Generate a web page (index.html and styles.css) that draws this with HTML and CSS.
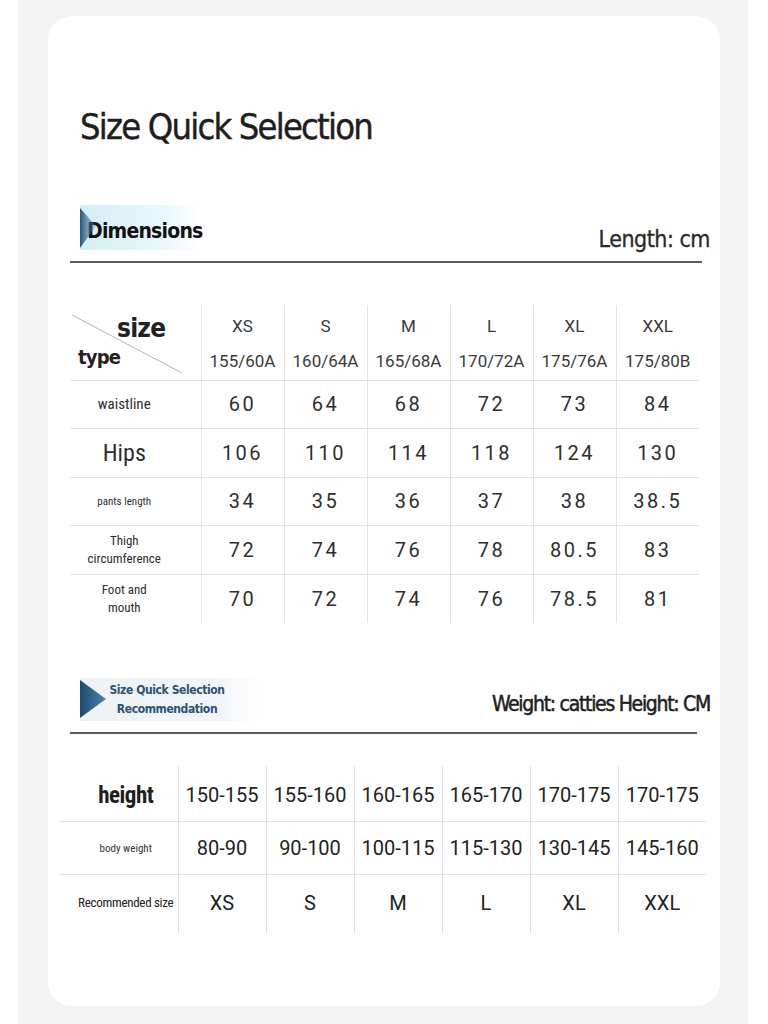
FILE: index.html
```html
<!DOCTYPE html>
<html lang="en">
<head>
<meta charset="utf-8">
<title>Size Quick Selection</title>
<link rel="stylesheet" href="styles.css">
</head>
<body>
<div class="panel">
  <div class="card">
    <h1 class="title">Size Quick Selection</h1>

    <div class="sec-head sec1">
      <div class="tag tag1">
        <svg class="tri" width="16" height="40" viewBox="0 0 16 40">
          <defs>
            <linearGradient id="g1" x1="0" y1="0" x2="1" y2="0">
              <stop offset="0" stop-color="#1f4d73"/>
              <stop offset="1" stop-color="#5d8fb5" stop-opacity="0.3"/>
            </linearGradient>
          </defs>
          <polygon points="0,0 16,18 0,40" fill="url(#g1)"/>
        </svg>
        <span class="tag-text">Dimensions</span>
      </div>
      <div class="unit">Length: cm</div>
    </div>

    <table class="dims">
      <tr class="hrow">
        <td class="corner">
          <svg class="diag" width="110" height="62" viewBox="0 0 110 62"><line x1="0" y1="4" x2="110" y2="62" stroke="#b5b5b5" stroke-width="1"/></svg>
          <div class="c-size">size</div>
          <div class="c-type">type</div>
        </td>
        <td><div class="sz">XS</div><div class="hw">155/60A</div></td>
        <td><div class="sz">S</div><div class="hw">160/64A</div></td>
        <td><div class="sz">M</div><div class="hw">165/68A</div></td>
        <td><div class="sz">L</div><div class="hw">170/72A</div></td>
        <td><div class="sz">XL</div><div class="hw">175/76A</div></td>
        <td><div class="sz">XXL</div><div class="hw">175/80B</div></td>
      </tr>
      <tr>
        <th class="lbl l-waist">waistline</th>
        <td>60</td><td>64</td><td>68</td><td>72</td><td>73</td><td>84</td>
      </tr>
      <tr>
        <th class="lbl l-hips">Hips</th>
        <td>106</td><td>110</td><td>114</td><td>118</td><td>124</td><td>130</td>
      </tr>
      <tr>
        <th class="lbl l-pants">pants length</th>
        <td>34</td><td>35</td><td>36</td><td>37</td><td>38</td><td>38.5</td>
      </tr>
      <tr>
        <th class="lbl l-two">Thigh<br>circumference</th>
        <td>72</td><td>74</td><td>76</td><td>78</td><td>80.5</td><td>83</td>
      </tr>
      <tr>
        <th class="lbl l-two">Foot and<br>mouth</th>
        <td>70</td><td>72</td><td>74</td><td>76</td><td>78.5</td><td>81</td>
      </tr>
    </table>

    <div class="sec-head sec2">
      <div class="tag tag2">
        <svg class="tri2" width="26" height="38" viewBox="0 0 26 38">
          <defs>
            <linearGradient id="g2" x1="0" y1="0" x2="1" y2="0">
              <stop offset="0" stop-color="#1d4a70"/>
              <stop offset="1" stop-color="#4f84ad"/>
            </linearGradient>
          </defs>
          <polygon points="0,0 26,19 0,38" fill="url(#g2)"/>
        </svg>
        <span class="tag2-text">Size Quick Selection<br>Recommendation</span>
      </div>
      <div class="unit unit2">Weight: catties Height: CM</div>
    </div>

    <table class="rec">
      <tr class="r-height">
        <th class="lbl l-height">height</th>
        <td>150-155</td><td>155-160</td><td>160-165</td><td>165-170</td><td>170-175</td><td>170-175</td>
      </tr>
      <tr class="r-weight">
        <th class="lbl l-body">body weight</th>
        <td>80-90</td><td>90-100</td><td>100-115</td><td>115-130</td><td>130-145</td><td>145-160</td>
      </tr>
      <tr class="r-size">
        <th class="lbl l-rec">Recommended size</th>
        <td>XS</td><td>S</td><td>M</td><td>L</td><td>XL</td><td>XXL</td>
      </tr>
    </table>
  </div>
</div>
</body>
</html>
```

FILE: styles.css
```css
* { box-sizing: border-box; }
html, body { margin: 0; padding: 0; background: #ffffff; }
body { width: 768px; height: 1024px; overflow: hidden; }

.panel {
  margin-left: 18px;
  width: 730px;
  height: 1024px;
  background: #f3f3f3;
  padding-top: 16px;
  padding-left: 30px;
}

.card {
  width: 672px;
  height: 990px;
  background: #ffffff;
  border-radius: 24px;
  padding-top: 87px;
}

.title, .tag-text, .unit, .lbl, .c-size, .c-type, .tag2-text {
  font-family: "DejaVu Sans Condensed", "DejaVu Sans", sans-serif;
  font-stretch: condensed;
}

.title {
  margin: 0 0 0 32px;
  font-size: 36px;
  line-height: 48px;
  font-weight: 400;
  color: #1e1e1e;
  letter-spacing: -1.8px;
  -webkit-text-stroke: 0.4px #1e1e1e;
}

/* section headers */
.sec-head {
  display: flex;
  justify-content: space-between;
  align-items: flex-end;
  margin-left: 22px;
  width: 632px;
  border-bottom: 2px solid #5a5a5a;
  position: relative;
}
.sec1 { margin-top: 54px; height: 58px; }
.sec2 { margin-top: 55px; height: 56px; width: 627px; }

.tag {
  align-self: flex-start;
  display: flex;
  align-items: center;
}
.tag1 {
  margin-left: 10px;
  width: 122px;
  height: 45px;
  background: linear-gradient(to right, #d4eef5 0%, #e4f7fb 60%, rgba(240,250,252,0) 100%);
}
.tri { flex: none; margin-right: -9px; opacity: 0.95; }
.tag-text {
  font-size: 21px;
  font-weight: 700;
  color: #111;
  line-height: 45px;
  letter-spacing: -0.8px;
  padding-top: 8px;
}

.unit {
  font-size: 23px;
  color: #2a2a2a;
  margin-right: -8px;
  margin-bottom: 8px;
  line-height: 28px;
  letter-spacing: -0.5px;
  -webkit-text-stroke: 0.3px #2a2a2a;
}

.tag2 {
  margin-left: 10px;
  width: 185px;
  height: 43px;
  background: linear-gradient(to right, #eef2f5 0%, #f2f5f7 75%, rgba(255,255,255,0) 100%);
}
.tri2 { flex: none; }
.tag2-text {
  flex: none;
  width: 122px;
  text-align: center;
  font-size: 12px;
  font-weight: 700;
  line-height: 19px;
  color: #2c5276;
  letter-spacing: -0.4px;
  padding-top: 2px;
}
.unit2 {
  font-size: 21px;
  margin-bottom: 14px;
  margin-right: -13px;
  color: #1e1e1e;
  letter-spacing: -1.3px;
  -webkit-text-stroke: 0.5px #1e1e1e;
}

/* dimension table */
table { border-collapse: collapse; table-layout: fixed; }

.dims {
  margin: 42px 0 0 22px;
  width: 629px;
}
.dims td, .dims th {
  border-left: 1px solid #e3e3e3;
  border-top: 1px solid #e3e3e3;
  width: 83px;
  height: 48.5px;
  padding: 0;
  text-align: center;
  vertical-align: middle;
  font-family: Roboto, "Liberation Sans", sans-serif;
  font-size: 20px;
  letter-spacing: 2.5px;
  color: #2e2e2e;
}
.dims th.lbl, .dims td.corner {
  width: 131px;
  border-left: none;
}
.dims th.lbl { padding-right: 22px; }
.dims .hrow td { border-top: none; height: 75px; }

.corner { position: relative; text-align: left !important; }
.diag { position: absolute; left: 2px; top: 6px; }
.c-size {
  padding-left: 47px;
  font-size: 26px;
  font-weight: 700;
  color: #222;
  line-height: 30px;
  letter-spacing: -0.8px;
}
.c-type {
  padding-left: 8px;
  font-size: 20px;
  font-weight: 700;
  color: #222;
  line-height: 28px;
  letter-spacing: -0.8px;
}

.sz, .hw {
  font-family: Roboto, "Liberation Sans", sans-serif;
  font-weight: 400;
  color: #3a3a3a;
  letter-spacing: 0;
}
.sz { font-size: 17px; line-height: 22px; margin-top: 2px; }
.hw { font-size: 17px; line-height: 22px; margin-top: 13px; }

.lbl { font-weight: 400; color: #333; letter-spacing: 0 !important; }
.l-waist { font-size: 15px !important; }
.l-hips { font-size: 24px !important; color: #333; }
.l-pants { font-size: 11px !important; }
.l-two { font-size: 13px !important; line-height: 18px; }

/* recommendation table */
.rec {
  margin: 32px 0 0 12px;
  width: 646px;
}
.rec td, .rec th {
  border-left: 1px solid #e3e3e3;
  border-top: 1px solid #e3e3e3;
  width: 88px;
  padding: 0;
  text-align: center;
  vertical-align: middle;
  font-family: Roboto, "Liberation Sans", sans-serif;
  font-size: 20px;
  font-weight: 400;
  color: #222;
  letter-spacing: 0;
}
.rec th.lbl { width: 118px; border-left: none; padding-left: 14px; }
.rec .r-height td, .rec .r-height th { border-top: none; height: 56px; padding-top: 4px; }
.rec .r-weight td, .rec .r-weight th { height: 53px; }
.rec .r-size td, .rec .r-size th { height: 58px; padding-bottom: 2px; }
.l-height { font-size: 23px !important; font-weight: 700 !important; color: #1e1e1e !important; letter-spacing: -0.5px !important; }
.l-body { font-size: 11px !important; font-weight: 400 !important; color: #333 !important; }
.l-rec { font-size: 13px !important; font-weight: 400 !important; color: #222 !important; letter-spacing: -0.3px !important; }
```
